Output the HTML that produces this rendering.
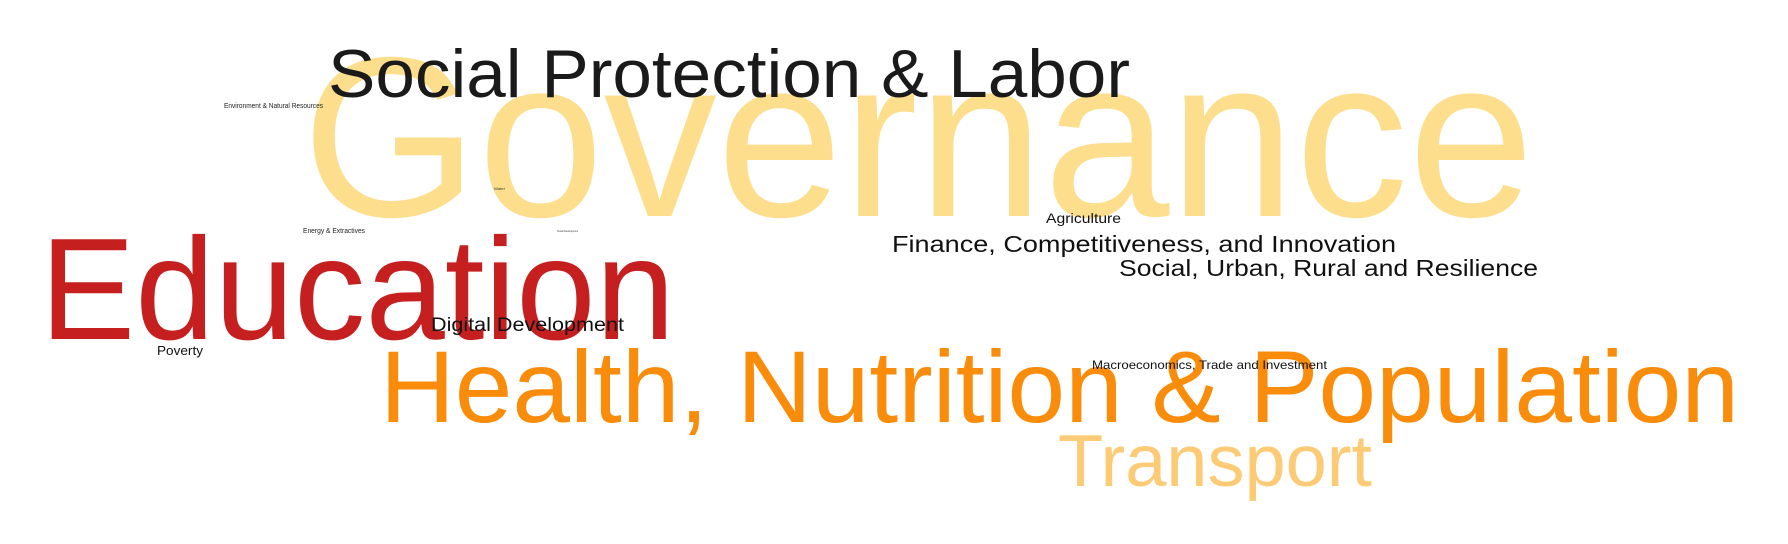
<!DOCTYPE html>
<html><head><meta charset="utf-8"><style>
html,body{margin:0;padding:0;background:#fff;width:1788px;height:544px;overflow:hidden}
svg{display:block}
text{font-family:"Liberation Sans",sans-serif}
</style></head><body>
<svg width="1788" height="544" viewBox="0 0 1788 544" xmlns="http://www.w3.org/2000/svg">
<text x="302" y="216" font-size="228" fill="#fdde8c" textLength="1232" lengthAdjust="spacingAndGlyphs">Governance</text>
<text x="328" y="97" font-size="68" fill="#1a1a1a" textLength="802" lengthAdjust="spacingAndGlyphs">Social Protection &amp; Labor</text>
<text x="40" y="339" font-size="145" fill="#c61f1f" textLength="635" lengthAdjust="spacingAndGlyphs">Education</text>
<text x="380" y="422" font-size="102" fill="#f98c0a" textLength="1359" lengthAdjust="spacingAndGlyphs">Health, Nutrition &amp; Population</text>
<text x="1058" y="486" font-size="73" fill="#fdca75" textLength="314" lengthAdjust="spacingAndGlyphs">Transport</text>
<text x="892" y="252" font-size="23" fill="#111" textLength="504" lengthAdjust="spacingAndGlyphs">Finance, Competitiveness, and Innovation</text>
<text x="1119" y="276" font-size="23" fill="#111" textLength="419" lengthAdjust="spacingAndGlyphs">Social, Urban, Rural and Resilience</text>
<text x="1046" y="223" font-size="14" fill="#111" textLength="75" lengthAdjust="spacingAndGlyphs">Agriculture</text>
<text x="431" y="331" font-size="19" fill="#111" textLength="193" lengthAdjust="spacingAndGlyphs">Digital Development</text>
<text x="157" y="355" font-size="13" fill="#111" textLength="46" lengthAdjust="spacingAndGlyphs">Poverty</text>
<text x="1092" y="369" font-size="12" fill="#111" textLength="235" lengthAdjust="spacingAndGlyphs">Macroeconomics, Trade and Investment</text>
<text x="224" y="108" font-size="7" fill="#222" textLength="99" lengthAdjust="spacingAndGlyphs">Environment &amp; Natural Resources</text>
<text x="303" y="233" font-size="7" fill="#222" textLength="62" lengthAdjust="spacingAndGlyphs">Energy &amp; Extractives</text>
<text x="494" y="190" font-size="4" fill="#333" textLength="11" lengthAdjust="spacingAndGlyphs">Water</text>
<text x="557" y="232" font-size="3" fill="#333" textLength="21" lengthAdjust="spacingAndGlyphs">Social Development</text>
</svg>
</body></html>
